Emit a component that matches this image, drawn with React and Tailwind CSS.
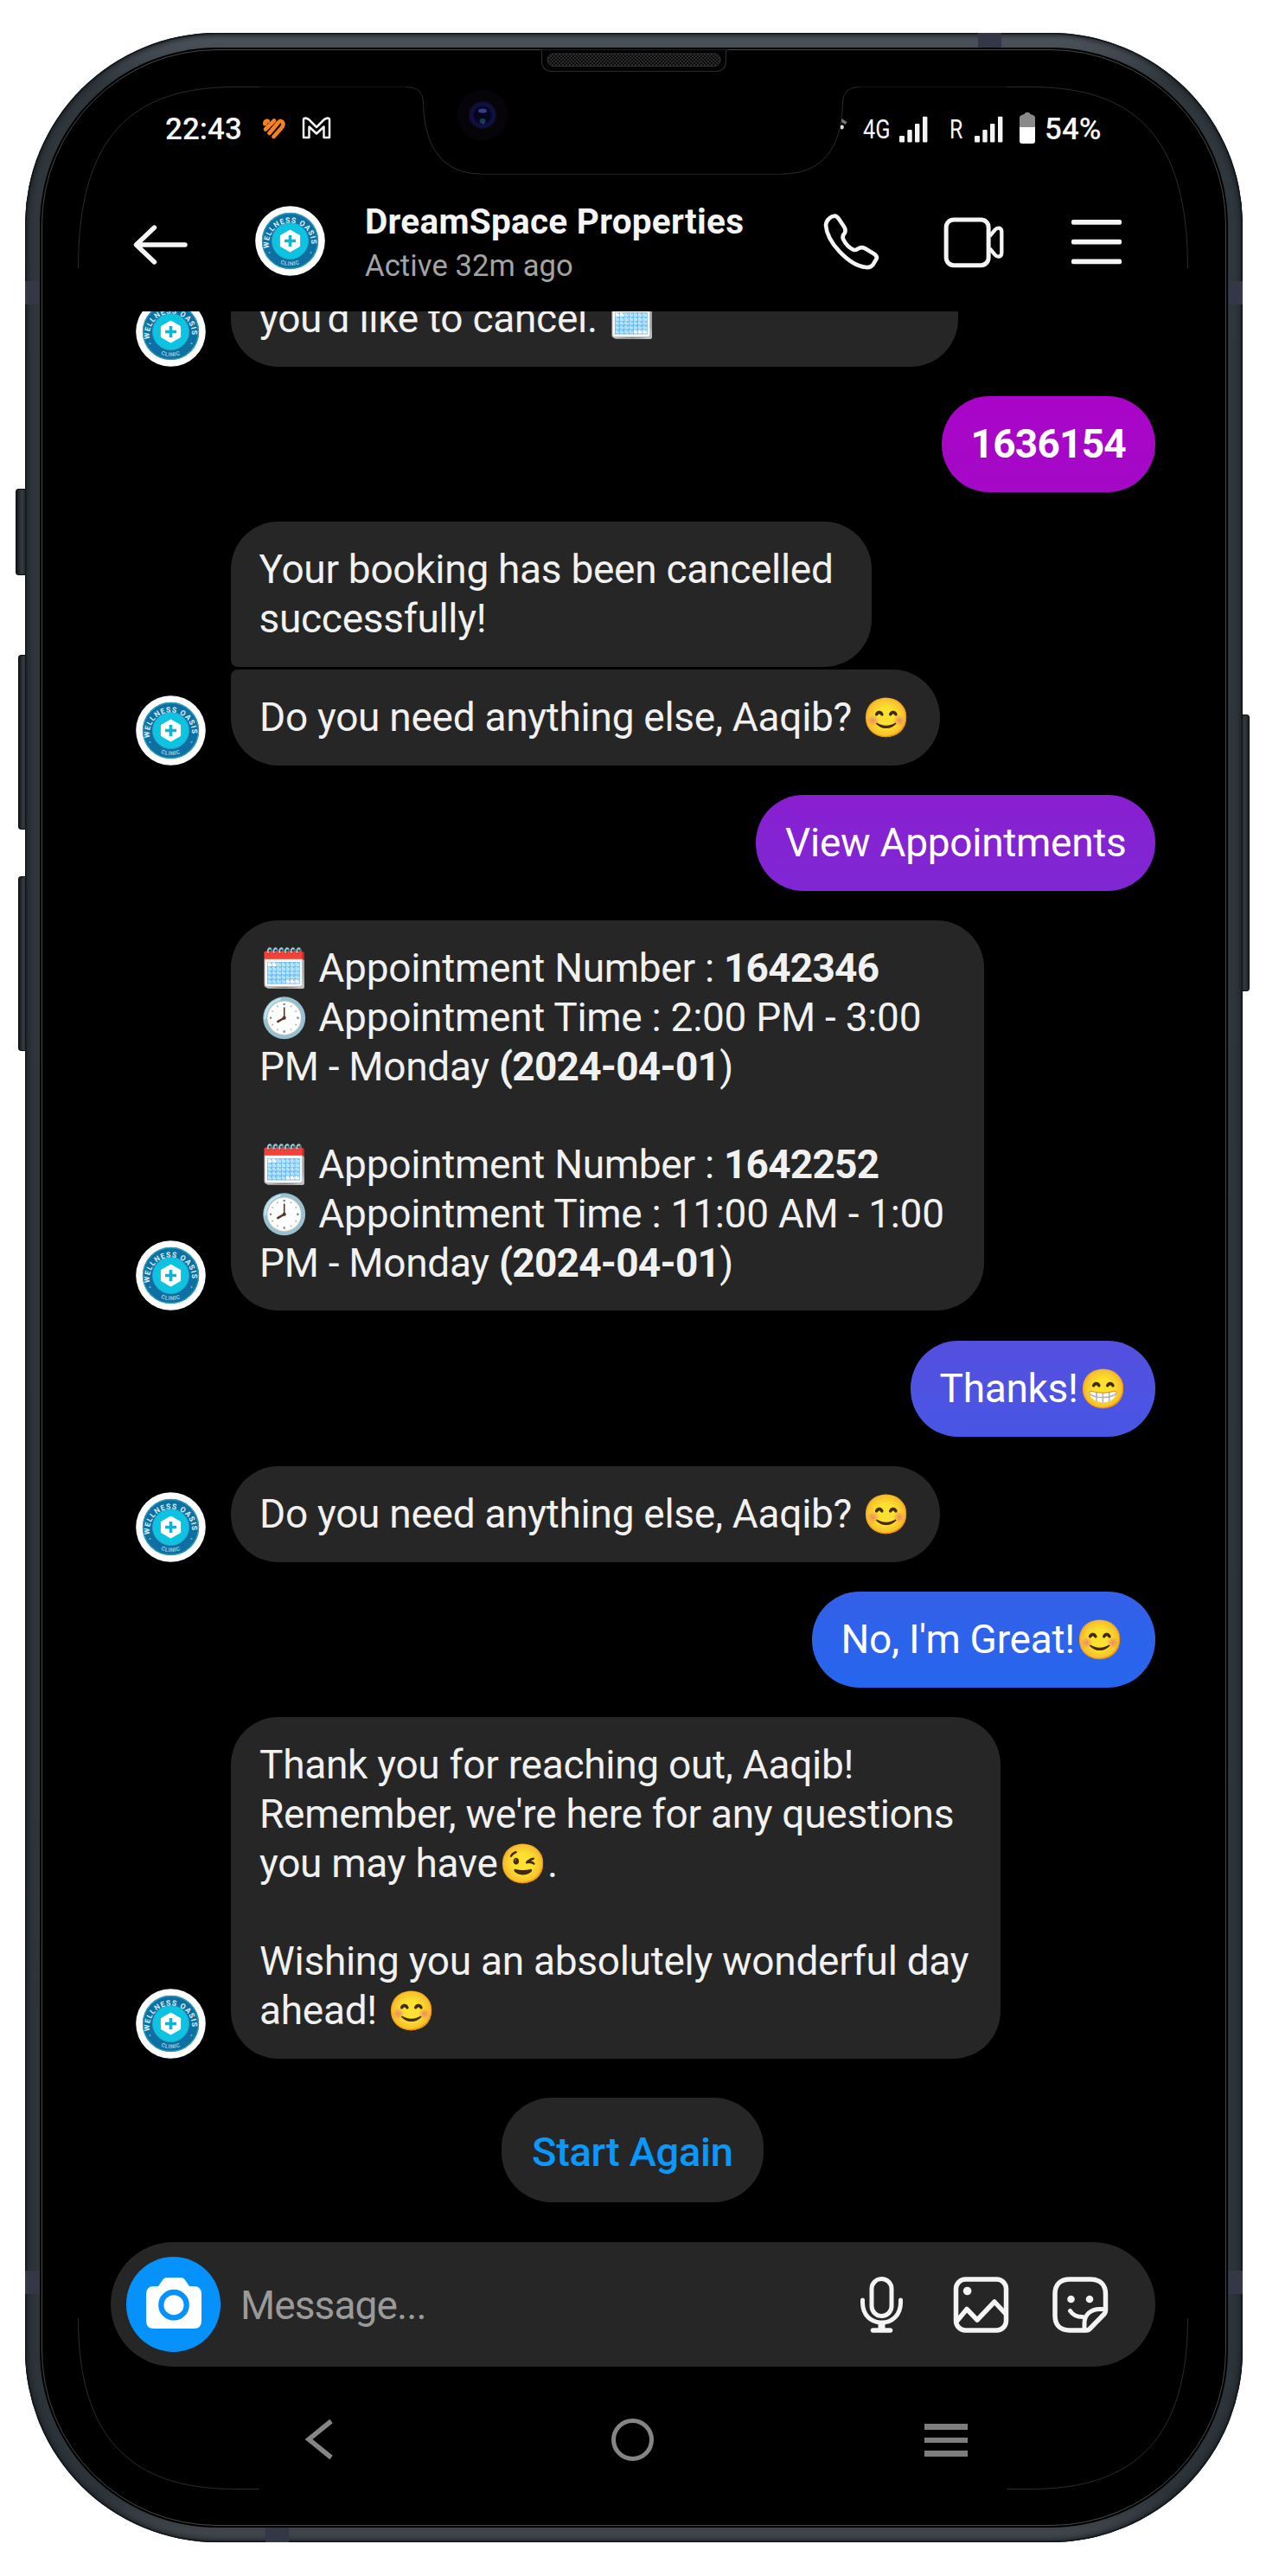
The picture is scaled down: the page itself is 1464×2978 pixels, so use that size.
import React from "react";

const E = ({ children }) => <span className="mr-[1.500px] ml-[1px] text-[44.5px] leading-[0]">{children}</span>;
const B = ({ children }) => <b className="tracking-[-0.75px]">{children}</b>;

function Avatar() {
  return (
    <svg className="h-[81px] w-[81px] shrink-0" viewBox="0 0 81 81">
      <defs>
        <path id="arcTop" d="M16.500 50 A24.700 24.700 0 1 1 64.500 50" />
        <path id="arcBottom" d="M21 61.500 A28.500 28.500 0 0 0 60 61.500" />
      </defs>
      <circle cx="40.5" cy="40.5" r="40.3" fill="#fff" />
      <circle cx="40.5" cy="40.5" r="32.6" fill="#0e6fa3" />
      <circle cx="40.5" cy="40.5" r="32" fill="none" stroke="#2b9cb8" strokeWidth="1.4" />
      <circle cx="40.5" cy="40.5" r="21" fill="#0cc4e2" stroke="#3aa5c4" strokeWidth="0.8" />
      <path d="M40.5 28 L51.6 34.3 V46.7 L40.5 53 L29.4 46.7 V34.3Z" fill="#fff" stroke="#fff" strokeWidth="1" strokeLinejoin="round" />
      <path d="M40.5 34 V47 M34 40.5 H47" stroke="#12b4d4" strokeWidth="3.6" />
      <text fill="#d9f1f8" fontSize="8.600" fontWeight="700" fontFamily="Roboto, sans-serif" letterSpacing="0.95">
        <textPath href="#arcTop" startOffset="1">WELLNESS OASIS</textPath>
      </text>
      <text fill="#8fd3e6" fontSize="6.6" fontWeight="700" fontFamily="Roboto, sans-serif" letterSpacing="0.5" textAnchor="middle">
        <textPath href="#arcBottom" startOffset="50%">CLINIC</textPath>
      </text>
      <circle cx="16.500" cy="54" r="1.1" fill="#5cc0da" />
      <circle cx="64.500" cy="54" r="1.1" fill="#5cc0da" />
    </svg>
  );
}

function Signal({ className }) {
  return (
    <svg className={className} viewBox="0 0 33 31" fill="#f4f4f4" preserveAspectRatio="none">
      <rect x="0" y="23" width="6" height="7.5" rx="1" />
      <rect x="9.3" y="16" width="5.4" height="14.5" rx="1" />
      <rect x="18" y="9" width="5.4" height="21.5" rx="1" />
      <rect x="27" y="0.8" width="5.4" height="29.7" rx="1" />
    </svg>
  );
}

function StatusBar() {
  return (
    <div className="mt-[60px] flex h-[63px] items-center pl-[142px] font-medium leading-none text-[#f6f6f6]">
      <span className="w-[112px] text-[35px]">22:43</span>
      <svg className="mb-[3px] h-[25px] w-[28px]" viewBox="0 0 28 25" fill="none" stroke="#f5821f" strokeLinecap="round">
        <path d="M3.500 7 Q3.500 4 6.500 4" strokeWidth="5" />
        <path d="M4 13.500 L14 3.500" strokeWidth="4.600" />
        <path d="M8.500 18 L18.500 6 Q21 2.500 23.500 5 Q26 8 22 12.500 L13.500 22" strokeWidth="4.6" />
      </svg>
      <svg className="mb-[3px] ml-[18px] h-[26px] w-[34px]" viewBox="0 0 34 26" fill="none" stroke="#f2f2f2" strokeWidth="2.5" strokeLinejoin="round">
        <path d="M2 24 V3.5 Q2 1.5 4.5 1.5 L8 3 L17 12 L26 3 L29.5 1.5 Q32 1.5 32 3.5 V24 H25.5 V11.5 L17 19.5 L8.5 11.5 V24Z" />
      </svg>
      <svg className="mb-[12px] ml-[589px] h-[16px] w-[8px]" viewBox="0 0 8 16">
        <path d="M1 1 L7.500 5 L5.500 8 L1 5Z" fill="#777" />
        <circle cx="1.5" cy="11" r="2.4" fill="#ddd" />
      </svg>
      <span className="ml-[18px] w-[42px] text-[31px] font-normal">
        <span className="inline-block origin-left scale-x-[0.82]">4G</span>
      </span>
      <Signal className="h-[31px] w-[33px]" />
      <span className="ml-[25px] w-[29px] text-[31px] font-normal">
        <span className="inline-block origin-left scale-x-[0.8]">R</span>
      </span>
      <Signal className="h-[31px] w-[33px]" />
      <svg className="mb-[3px] ml-[19px] h-[36px] w-[18px]" viewBox="0 0 18 36">
        <path d="M0 6 Q0 3.5 2.5 3 L5.5 2 Q6 0 8 0 H10 Q12 0 12.5 2 L15.500 3 Q18 3.500 18 6 V17 H0Z" fill="#8a8a8a" />
        <path d="M0 17 H18 V33 Q18 36 15 36 H3 Q0 36 0 33Z" fill="#fff" />
      </svg>
      <span className="ml-[11px] text-[35px]">54%</span>
    </div>
  );
}

function Header() {
  return (
    <div className="flex h-[179px] items-center pl-[105px] pt-4">
      <svg className="mt-[8px] h-[48px] w-[64px]" viewBox="0 0 64 48" fill="none" stroke="#f5f5f5" strokeWidth="5.4" strokeLinecap="round" strokeLinejoin="round">
        <path d="M60 24 H4 M24.500 4 L3.500 24 L24.500 44" />
      </svg>
      <div className="ml-[77px] flex">
        <Avatar />
      </div>
      <div className="mt-[4px] ml-[46px] w-[530px] whitespace-nowrap">
        <div className="text-[40.500px] font-bold leading-[52px] tracking-[0.27px] text-[#f5f5f5]">DreamSpace Properties</div>
        <div className="text-[34.600px] leading-[50px] tracking-[0.1px] text-[#a3a3a3]">Active 32m ago</div>
      </div>
      <svg className="mt-[2px] h-[64.700px] w-[65.300px]" viewBox="36 410 196 194" fill="none" stroke="#f5f5f5" strokeWidth="14" strokeLinejoin="round">
        <path d="M72 419 Q80 415 90 428 L108 455 Q116 467 110 478 Q100 488 106 500 Q118 524 140 535 Q150 538 158 531 Q168 524 180 530 L210 548 Q226 558 220 568 L208 588 Q200 598 184 596 Q140 592 92 541 Q48 494 45 450 Q46 434 60 424 Q66 419 72 419Z" />
      </svg>
      <svg className="mt-[2px] ml-[73px] h-[60px] w-[71.300px]" viewBox="450 418 214 180" fill="none" stroke="#f5f5f5" strokeWidth="15" strokeLinejoin="round">
        <rect x="462.500" y="430" width="147" height="158" rx="26" />
        <path strokeWidth="13" d="M614 487 L632 465 Q638 458 646 459 Q655 461 655 472 L655 544 Q655 556 646 558 Q638 559 632 552 L614 530" />
      </svg>
      <svg className="mt-[2px] ml-[77px] h-[54px] w-[58px]" viewBox="0 0 58 54" fill="#f5f5f5">
        <rect x="0" y="1" width="58" height="5.800" rx="2" />
        <rect x="0" y="23.800" width="58" height="5.800" rx="2" />
        <rect x="0" y="46.500" width="58" height="5.800" rx="2" />
      </svg>
    </div>
  );
}

const bubble = "rounded-[55px] bg-[#262626] px-[33px] py-[26.8px] whitespace-nowrap";

function Received({ children }) {
  return (
    <div className="flex shrink-0 items-end gap-[29px] pl-[108px]">
      <Avatar />
      {children}
    </div>
  );
}

function Sent({ children, className }) {
  return (
    <div className="flex shrink-0 justify-end pr-[81px]">
      <div className={"rounded-[55px] bg-linear-to-b py-[26.8px] pl-[34px] whitespace-nowrap text-white " + className}>{children}</div>
    </div>
  );
}

function Chat() {
  return (
    <div className="flex h-[2232px] shrink-0 flex-col gap-[34.700px] overflow-hidden text-[46px] leading-[56.8px] tracking-[-0.28px] text-[#f1f1f1]">
      <div className="-mt-[103.500px] flex shrink-0 flex-col">
        <Received>
          <div className={bubble + " w-[841px]"}>
            <br />
            you'd like to cancel. <E>🗓️</E>
          </div>
        </Received>
      </div>
      <Sent className="w-[247px] from-[#aa05c9] to-[#a409c6]">
        <B>1636154</B>
      </Sent>
      <div className="flex shrink-0 flex-col gap-[3.500px]">
        <div className="pl-[217.500px]">
          <div className={bubble + " w-[741px] rounded-bl-[8px]"}>
            Your booking has been cancelled
            <br />
            successfully!
          </div>
        </div>
        <Received>
          <div className={bubble + " w-[820px] rounded-tl-[8px]"}>
            Do you need anything else, Aaqib? <E>😊</E>
          </div>
        </Received>
      </div>
      <Sent className="w-[461.500px] from-[#891fd0] to-[#7f27d4]">View Appointments</Sent>
      <Received>
        <div className={bubble + " w-[871px]"}>
          <E>🗓️</E> Appointment Number : <B>1642346</B>
          <br />
          <E>🕗</E> Appointment Time : 2:00 PM - 3:00
          <br />
          PM - Monday <B>(2024-04-01</B>)
          <br />
          <br />
          <E>🗓️</E> Appointment Number : <B>1642252</B>
          <br />
          <E>🕗</E> Appointment Time : 11:00 AM - 1:00
          <br />
          PM - Monday <B>(2024-04-01</B>)
        </div>
      </Received>
      <Sent className="w-[283px] from-[#554fdf] to-[#4856e4]">
        Thanks!<E>😁</E>
      </Sent>
      <Received>
        <div className={bubble + " w-[820px]"}>
          Do you need anything else, Aaqib? <E>😊</E>
        </div>
      </Received>
      <Sent className="w-[397px] from-[#3460e8] to-[#2566ee]">
        No, I'm Great!<E>😊</E>
      </Sent>
      <Received>
        <div className={bubble + " w-[890px]"}>
          Thank you for reaching out, Aaqib!
          <br />
          Remember, we're here for any questions
          <br />
          you may have<E>😉</E>.
          <br />
          <br />
          Wishing you an absolutely wonderful day
          <br />
          ahead! <E>😊</E>
        </div>
      </Received>
      <div className="mt-[11px] mr-[3px] flex h-[121px] w-[302.500px] shrink-0 items-center justify-center self-center rounded-[58px] bg-[#262626] pt-[4px] text-[47px] font-medium tracking-[-0.300px] text-[#0998fb]">
        Start Again
      </div>
    </div>
  );
}

function Composer() {
  return (
    <div className="mr-[81px] ml-[79px] flex h-[144px] shrink-0 items-center rounded-full bg-[#262626] pl-[18px]">
      <div className="flex h-[110px] w-[109px] items-center justify-center rounded-full bg-[#0692fd]">
        <svg className="mb-[3px] h-[60px] w-[64px]" viewBox="0 0 64 60">
          <path d="M9 10 H14 L18.500 3.500 Q20.500 0 24 0 H40 Q43.500 0 45.500 3.500 L50 10 H55 Q64 10 64 19 V50 Q64 59 55 59 H9 Q0 59 0 50 V19 Q0 10 9 10Z" fill="#fff" />
          <circle cx="32" cy="31.700" r="14.700" fill="none" stroke="#0692fd" strokeWidth="6.300" />
        </svg>
      </div>
      <span className="mt-[3px] ml-[23px] w-[715px] text-[46px] tracking-[-0.900px] text-[#9a9a9a]">Message...</span>
      <svg className="h-[68px] w-[53px]" viewBox="0 0 53 68" fill="none" stroke="#f4f4f4" strokeWidth="5" strokeLinecap="round">
        <rect x="15" y="4.500" width="23" height="43" rx="11.500" />
        <path d="M4.500 29 V32 C4.500 46 14 55 26.500 55 S48.500 46 48.500 32 V29" />
        <path d="M26.500 56 V62" strokeWidth="8" strokeLinecap="butt" />
        <path d="M16.500 64 H36.500" strokeWidth="5.500" />
      </svg>
      <svg className="ml-[54px] h-[70px] w-[69px]" viewBox="0 0 69 70" fill="none" stroke="#f4f4f4" strokeWidth="5.500" strokeLinejoin="round">
        <rect x="5.500" y="6" width="58" height="59" rx="11" />
        <circle cx="18.600" cy="19.500" r="4.800" fill="#f4f4f4" stroke="none" />
        <path d="M6 55 L18 40.500 L30 53 L50 32 L63 46" />
      </svg>
      <svg className="ml-[46px] h-[70px] w-[69px]" viewBox="0 0 69 70" fill="none" stroke="#f4f4f4" strokeWidth="5.500" strokeLinejoin="round" strokeLinecap="round">
        <path d="M41 65 H22 C10 65 5 58 5 48 V23 C5 12 11 6 22 6 H46 C57 6 63.500 12 63.500 23 V42 Q63.500 44 62 46 L45 63.500 Q43.500 65 41 65Z" />
        <path d="M62 40.500 H57 C46 40.500 39 47 39 57 V64" strokeWidth="5" />
        <path d="M22.500 42.500 Q27 49.500 37 49.500" strokeWidth="5" />
        <circle cx="23.500" cy="29" r="4.300" fill="#f4f4f4" stroke="none" />
        <circle cx="45" cy="29" r="4.300" fill="#f4f4f4" stroke="none" />
      </svg>
    </div>
  );
}

function NavBar() {
  return (
    <div className="ml-[139px] flex h-[168px] w-[1087px] items-center">
      <div className="flex flex-1 justify-center">
        <svg className="h-[48px] w-[34px]" viewBox="0 0 34 48" fill="none" stroke="#858585" strokeWidth="5.500">
          <path d="M31 3 L5 24 L31 45" />
        </svg>
      </div>
      <div className="flex flex-1 justify-center">
        <div className="h-[49px] w-[49px] rounded-full border-[5px] border-[#858585]" />
      </div>
      <div className="flex flex-1 flex-col items-center gap-[9px] pt-[2px]">
        <div className="h-[6.500px] w-[50px] bg-[#7d7d7d]" />
        <div className="h-[6.500px] w-[50px] bg-[#7d7d7d]" />
        <div className="h-[6.500px] w-[50px] bg-[#7d7d7d]" />
      </div>
    </div>
  );
}

/* Glass edge, sensor notch, front camera and earpiece */
function Hardware() {
  return (
    <svg className="pointer-events-none absolute top-0 left-0 h-[2978px] w-[1464px]" viewBox="0 0 1464 2978" fill="none">
      <defs>
        <pattern id="mesh" width="4" height="4" patternUnits="userSpaceOnUse">
          <rect width="4" height="4" fill="#0a0a0a" />
          <path d="M0 0h2v2H0z M2 2h2v2H2z" fill="#2c2c2c" />
        </pattern>
        <radialGradient id="lens">
          <stop offset="0" stopColor="#0b0b3a" />
          <stop offset="0.6" stopColor="#080830" />
          <stop offset="0.8" stopColor="#12124a" />
          <stop offset="1" stopColor="#0c0c1c" />
        </radialGradient>
      </defs>
      <g stroke="#363636" strokeWidth="0.8">
        <path d="M90.500 310 C90.500 160 150 100.500 272 100.500 H300" />
        <path d="M1373.500 310 C1373.500 160 1314 100.500 1192 100.500 H1164" />
        <path d="M90.500 2680 C90.500 2817 150 2877.500 272 2877.500 H300" />
        <path d="M1373.500 2680 C1373.500 2817 1314 2877.500 1192 2877.500 H1164" />
        <path d="M470 100.500 Q489 100.500 489.500 118 C490 160 505 201 556 201" />
        <path d="M994 100.500 Q975 100.500 974.500 118 C974 160 959 201 905 201" />
      </g>
      <path d="M300 100.500 H470 M994 100.500 H1164" stroke="#121212" />
      <path d="M556 201.500 H905" stroke="#1c1c1c" />
      <path d="M624 57.500 Q626.500 57.500 626.500 61 V70 Q626.500 82.500 639 82.500 H827 Q839.500 82.500 839.500 70 V61 Q839.500 57.500 842 57.500" fill="#030303" stroke="#2a2a2a" strokeWidth="1.200" />
      <rect x="633" y="62" width="200" height="14.500" rx="7" fill="url(#mesh)" stroke="#333" strokeWidth="1" />
      <circle cx="558" cy="133" r="29.500" fill="#060408" />
      <circle cx="558" cy="133" r="16" fill="url(#lens)" />
      <circle cx="558" cy="133" r="9.500" fill="#04041c" />
      <ellipse cx="558" cy="128" rx="5" ry="2.600" fill="#38388c" />
      <ellipse cx="558" cy="140" rx="3.500" ry="3" fill="#104050" />
      <circle cx="559" cy="142.500" r="1.300" fill="#5a2070" />
    </svg>
  );
}

const sideButton = "absolute bg-linear-to-r from-[#14181c] via-[#343b41] to-[#1d2226] border border-[#0b0e11]";
const band = "absolute bg-[#343746]";

export default function App() {
  return (
    <div className="relative h-[2978px] w-[1464px] overflow-hidden bg-white pt-[38px] pl-[29px] font-['Roboto',sans-serif]">
      <div className={sideButton + " top-[565px] left-[18px] h-[100px] w-[14px] rounded-l-[3px]"} />
      <div className={sideButton + " top-[757px] left-[20.500px] h-[202px] w-[12px] rounded-l-[3px]"} />
      <div className={sideButton + " top-[1013px] left-[20.500px] h-[202px] w-[12px] rounded-l-[3px]"} />
      <div className={sideButton + " top-[826px] left-[1433px] h-[320px] w-[12px] rounded-r-[3px]"} />
      <div className="relative h-[2901px] w-[1407.500px] rounded-[222px] bg-[linear-gradient(to_bottom,#50565f_0%,#2f363c_2%,#2c3339_98%,#43494e_100%)] p-[17px] shadow-[inset_0_0_0_1.500px_#12171b,inset_0_0_6px_3px_#1a2025]">
        <div className={band + " top-[287px] left-0 h-[27px] w-[17px]"} />
        <div className={band + " top-[287px] right-0 h-[27px] w-[17px]"} />
        <div className={band + " top-[2587px] left-0 h-[27px] w-[17px]"} />
        <div className={band + " top-[2587px] right-0 h-[27px] w-[17px]"} />
        <div className={band + " top-0 left-[1102px] h-[17px] w-[27px]"} />
        <div className={band + " bottom-0 left-[278px] h-[17px] w-[27px]"} />
        <div className="h-full w-full rounded-[205px] bg-black p-[2px]">
          <div className="h-full w-full overflow-hidden rounded-[203px] border border-[#484848] bg-black">
            <StatusBar />
            <Header />
            <Chat />
            <Composer />
            <NavBar />
          </div>
        </div>
      </div>
      <Hardware />
    </div>
  );
}
